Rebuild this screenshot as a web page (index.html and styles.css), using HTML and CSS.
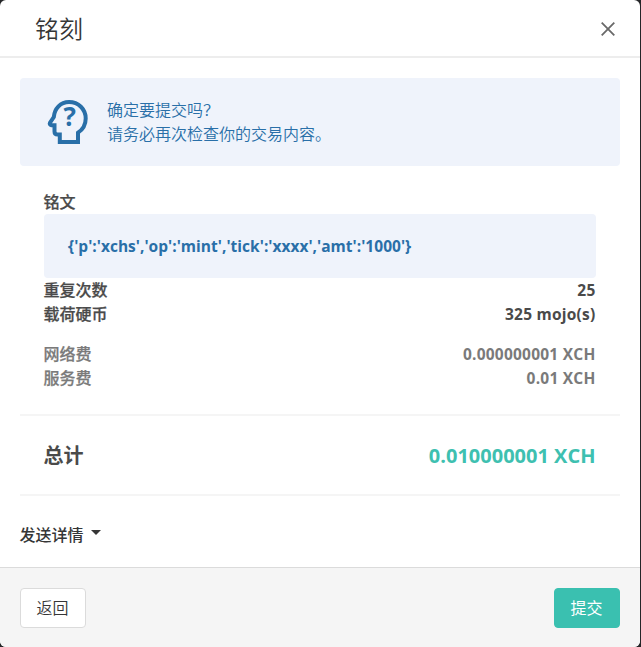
FILE: index.html
```html
<!DOCTYPE html>
<html lang="zh-CN">
<head>
<meta charset="utf-8">
<title>铭刻</title>
<link rel="stylesheet" href="styles.css">
</head>
<body>
<main class="modal">
  <header class="head">
    <h1>铭刻</h1>
    <svg class="close" viewBox="0 0 14 14" aria-label="关闭"><path d="M.7.7l12.6 12.6M13.3.7L.7 13.3"/></svg>
  </header>
  <section class="body">
    <div class="notice">
      <svg class="head-icon" viewBox="0 0 42 44">
        <path d="M12.800 42V34.500H10.500Q7.500 34.500 7.500 31.500V25.200H4.500Q2 24.700 3 22.700L6.800 17C7.500 8.500 13.500 2 22 2C31.500 2 38.700 9.200 38.700 18.500C38.700 24.500 35.800 29.500 31 32.700V42Z"/>
        <text x="22.8" y="26">?</text>
      </svg>
      <p><span class="line">确定要提交吗？</span><span class="line">请务必再次检查你的交易内容。</span></p>
    </div>
    <div class="details">
      <div class="row"><span>铭文</span></div>
      <div class="code"><span>{'p':'xchs','op':'mint','tick':'xxxx','amt':'1000'}</span></div>
      <div class="row"><span>重复次数</span><span class="value">25</span></div>
      <div class="row"><span>载荷硬币</span><span class="value">325 mojo(s)</span></div>
      <div class="fees">
        <div class="row"><span>网络费</span><span class="value">0.000000001 XCH</span></div>
        <div class="row"><span>服务费</span><span class="value">0.01 XCH</span></div>
      </div>
    </div>
    <div class="total"><span>总计</span><span class="amount">0.010000001 XCH</span></div>
    <div class="more">发送详情<i class="caret"></i></div>
  </section>
  <footer class="foot">
    <button class="btn">返回</button>
    <button class="btn primary">提交</button>
  </footer>
</main>
</body>
</html>
```
FILE: styles.css
```css
* { box-sizing: border-box; }
body {
  margin: 0;
  background: #242628;
  font: 16px/24px "Open Sans", "Noto Sans CJK SC", sans-serif;
  color: #4a4a4a;
}
.modal {
  width: 640px;
  height: 647px;
  display: flex;
  flex-direction: column;
  background: #fff;
  border-radius: 6px;
  overflow: hidden;
}
.head {
  height: 58px;
  flex: none;
  display: flex;
  align-items: center;
  justify-content: space-between;
  padding: 2px 25.500px 0 35px;
  border-bottom: 2px solid #ededed;
}
h1 { margin: 0; font-size: 24px; font-weight: 350; line-height: 36px; color: #363636; }
.close { width: 14px; height: 14px; fill: none; stroke: #696969; stroke-width: 1.8; }
.body { flex: 1; padding: 20px 20px 0; }
.notice {
  height: 88px;
  display: flex;
  align-items: center;
  padding: 0 27px;
  gap: 18px;
  background: #eff3fb;
  border-radius: 4px;
  color: #296fa8;
}
.notice p { margin: 0; font-weight: 350; }
.line { display: block; }
.head-icon { width: 42px; height: 44px; flex: none; }
.head-icon path { fill: none; stroke: #296fa8; stroke-width: 4; }
.head-icon text { fill: #296fa8; font-size: 26px; font-weight: 700; text-anchor: middle; }
.details { padding: 24px; font-weight: 700; }
.row { height: 24px; display: flex; justify-content: space-between; }
.row > span:first-child { font-weight: 500; margin-left: -.5px; -webkit-text-stroke: .25px currentColor; }
.value { margin-right: .5px; font-size: 15.500px; letter-spacing: .23px; }
.code {
  height: 64px;
  padding: 20px 24px;
  background: #eff3fb;
  border-radius: 4px;
  color: #296fa8;
  font-size: 15.500px;
  letter-spacing: .03px;
}
.fees { margin-top: 16px; color: #7a7a7a; }
.total {
  height: 82px;
  display: flex;
  align-items: center;
  justify-content: space-between;
  padding: 2px 24.500px 0 23.500px;
  border: solid #f5f5f5;
  border-width: 2px 0;
  font-size: 20px;
  font-weight: 700;
}
.amount { color: #3ec0b0; font-size: 20px; }
.more {
  display: flex;
  align-items: center;
  margin: 27px 0 0 -.5px;
  font-weight: 500;
  color: #363636;
}
.caret {
  margin: -5px 0 0 7px;
  border: 5px solid transparent;
  border-top-color: #363636;
  border-bottom: 0;
}
.foot {
  height: 80px;
  flex: none;
  display: flex;
  justify-content: space-between;
  padding: 20px;
  background: #f5f5f5;
  border-top: 1px solid #dbdbdb;
}
.btn {
  width: 66px;
  height: 40px;
  padding: 0 1px 0 0;
  font: inherit;
  font-weight: 350;
  color: #363636;
  background: #fff;
  border: 1px solid #dbdbdb;
  border-radius: 4px;
}
.primary { background: #3ac0b0; border-color: #3ac0b0; color: #fff; font-weight: 400; }
```
